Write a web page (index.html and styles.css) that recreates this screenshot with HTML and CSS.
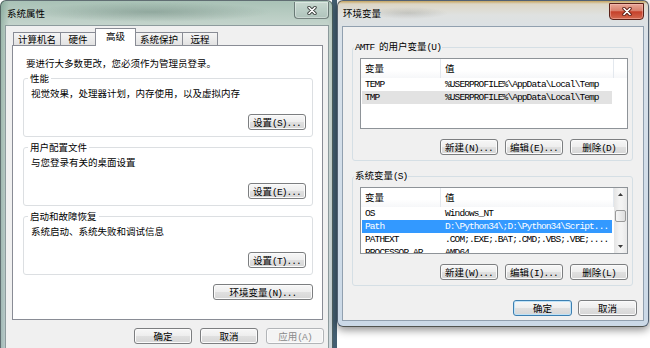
FILE: index.html
```html
<!DOCTYPE html>
<html lang="zh-CN">
<head>
<meta charset="utf-8">
<title>系统属性 / 环境变量</title>
<link rel="stylesheet" href="styles.css">
</head>
<body>
<div class="win win-sys">
  <div class="titlebar">
    <span class="title">系统属性</span>
    <span class="close close-inactive"><svg width="10" height="9" viewBox="0 0 10 9"><path d="M2 1.5l6 6M8 1.5l-6 6" stroke="#3a3f3d" stroke-width="3.4" stroke-linecap="round"/><path d="M2 1.5l6 6M8 1.5l-6 6" stroke="#fff" stroke-width="1.7" stroke-linecap="round"/></svg></span>
  </div>
  <div class="client">
    <div class="tabs">
      <span class="tab">计算机名</span>
      <span class="tab">硬件</span>
      <span class="tab active">高级</span>
      <span class="tab">系统保护</span>
      <span class="tab">远程</span>
    </div>
    <div class="panel">
      <p class="note">要进行大多数更改，您必须作为管理员登录。</p>
      <fieldset class="grp">
        <legend>性能</legend>
        <p>视觉效果，处理器计划，内存使用，以及虚拟内存</p>
        <div class="act"><button class="btn">设置<span class="m">(S)...</span></button></div>
      </fieldset>
      <fieldset class="grp">
        <legend>用户配置文件</legend>
        <p>与您登录有关的桌面设置</p>
        <div class="act"><button class="btn">设置<span class="m">(E)...</span></button></div>
      </fieldset>
      <fieldset class="grp">
        <legend>启动和故障恢复</legend>
        <p>系统启动、系统失败和调试信息</p>
        <div class="act"><button class="btn">设置<span class="m">(T)...</span></button></div>
      </fieldset>
      <div class="env-row"><button class="btn btn-wide">环境变量<span class="m">(N)...</span></button></div>
    </div>
    <div class="foot">
      <button class="btn">确定</button>
      <button class="btn">取消</button>
      <button class="btn" disabled>应用<span class="m">(A)</span></button>
    </div>
  </div>
</div>

<div class="win win-env">
  <div class="titlebar">
    <span class="title">环境变量</span>
    <span class="close close-active"><svg width="10" height="9" viewBox="0 0 10 9"><path d="M2 1.5l6 6M8 1.5l-6 6" stroke="#5a1a12" stroke-width="3.4" stroke-linecap="round"/><path d="M2 1.5l6 6M8 1.5l-6 6" stroke="#fff" stroke-width="1.7" stroke-linecap="round"/></svg></span>
  </div>
  <div class="client env-client">
    <fieldset class="grp egrp">
      <legend><span class="m">AMTF </span>的用户变量<span class="m">(U)</span></legend>
      <div class="list list-user">
        <div class="cols">
          <div class="lhead"><span class="hc hc1">变量</span><span class="hc hc2">值</span></div>
          <div class="row"><span class="c1 m">TEMP</span><span class="c2 m">%USERPROFILE%\AppData\Local\Temp</span></div>
          <div class="row sel-dim"><span class="c1 m">TMP</span><span class="c2 m">%USERPROFILE%\AppData\Local\Temp</span></div>
        </div>
      </div>
      <div class="btns">
        <button class="btn">新建<span class="m">(N)...</span></button>
        <button class="btn">编辑<span class="m">(E)...</span></button>
        <button class="btn">删除<span class="m">(D)</span></button>
      </div>
    </fieldset>
    <fieldset class="grp egrp egrp-sys">
      <legend>系统变量<span class="m">(S)</span></legend>
      <div class="list list-sys">
        <div class="cols">
          <div class="lhead"><span class="hc hc1">变量</span><span class="hc hc2">值</span></div>
          <div class="row"><span class="c1 m">OS</span><span class="c2 m">Windows_NT</span></div>
          <div class="row sel"><span class="c1 m">Path</span><span class="c2 m">D:\Python34\;D:\Python34\Script...</span></div>
          <div class="row"><span class="c1 m">PATHEXT</span><span class="c2 m">.COM;.EXE;.BAT;.CMD;.VBS;.VBE;....</span></div>
          <div class="row"><span class="c1 m">PROCESSOR_AR...</span><span class="c2 m">AMD64</span></div>
        </div>
        <div class="vscroll">
          <span class="sb-btn"><svg width="5" height="3" viewBox="0 0 5 3"><path d="M0 3L2.5 0L5 3z" fill="#3c3c3c"/></svg></span>
          <span class="sb-track"><span class="sb-thumb"></span></span>
          <span class="sb-btn"><svg width="5" height="3" viewBox="0 0 5 3"><path d="M0 0L2.5 3L5 0z" fill="#3c3c3c"/></svg></span>
        </div>
      </div>
      <div class="btns">
        <button class="btn">新建<span class="m">(W)...</span></button>
        <button class="btn">编辑<span class="m">(I)...</span></button>
        <button class="btn">删除<span class="m">(L)</span></button>
      </div>
    </fieldset>
    <div class="env-foot">
      <button class="btn btn-default">确定</button>
      <button class="btn">取消</button>
    </div>
  </div>
</div>
</body>
</html>
```
FILE: styles.css
```css
* { box-sizing: border-box; }
html, body { margin: 0; padding: 0; }
body {
  width: 650px;
  height: 348px;
  overflow: hidden;
  position: relative;
  font-family: "Noto Sans CJK SC", "Noto Sans", sans-serif;
  font-size: 9.5px;
  color: #000;
  background:
    linear-gradient(90deg, #ffffff 0 332px, #435f72 332px 337px, #ffffff 337px);
}
.m {
  font-family: "Liberation Mono", "DejaVu Sans Mono", monospace;
  letter-spacing: -0.9px;
}

/* ---------- windows ---------- */
.win {
  position: absolute;
  top: 0;
  display: flex;
  flex-direction: column;
  border: 1px solid rgba(25, 40, 45, 0.6);
  border-radius: 6px 6px 0 0;
}
.win-sys {
  left: 0;
  width: 333px;
  height: 348px;
  border-bottom: 0;
  padding: 0 3px 0 4px;
  background:
    radial-gradient(ellipse 120px 10px at 150px 11px, rgba(50, 80, 70, 0.28), transparent),
    linear-gradient(90deg, rgba(80, 130, 110, 0.35), transparent 8px),
    linear-gradient(180deg, #a9c2b6 0, #c4d4cc 24px, #c9d6d1 120px, #cdd7dc 100%);
}
.win-env {
  left: 337px;
  width: 312px;
  height: 327px;
  padding: 0 4px 5px 4px;
  border-radius: 6px;
  border-color: rgba(30, 45, 65, 0.7);
  background:
    radial-gradient(ellipse 40px 6px at 70px 12px, rgba(90, 90, 80, 0.2), transparent),
    linear-gradient(180deg, #c6a45e 0, #dcd6c6 3px, #dfe1e0 14px, #d8e1ea 40px, #cbd9e7 100%);
  box-shadow: 0 3px 8px rgba(0, 0, 0, 0.45);
}
.titlebar {
  display: flex;
  justify-content: space-between;
  align-items: flex-start;
  flex: none;
}
.win-sys .titlebar { height: 24px; }
.win-env .titlebar { height: 25px; }
.title {
  margin: 6px 0 0 2px;
  line-height: 12px;
  color: #000;
}
.win-env .title { margin-left: 1px; }
.close {
  width: 35px;
  height: 17px;
  display: flex;
  align-items: center;
  justify-content: center;
  border-radius: 0 0 4px 4px;
}
.close-inactive {
  margin-top: 1px;
  border: 1px solid rgba(40, 55, 55, 0.55);
  border-top: 0;
  background: linear-gradient(180deg, rgba(255,255,255,0.35), rgba(200,215,210,0.4) 50%, rgba(160,180,175,0.45));
  box-shadow: inset 0 0 0 1px rgba(255,255,255,0.35);
}
.close-active {
  margin-top: 2px;
  border: 1px solid #5b2118;
  background: linear-gradient(180deg, #e8a898 0, #d9806c 45%, #c5402a 52%, #d36a50 100%);
  box-shadow: inset 0 0 0 1px rgba(255, 200, 190, 0.45);
}

.client {
  flex: 1;
  min-height: 0;
  background: #f0f0f0;
  border: 1px solid rgba(60, 85, 90, 0.55);
}
.win-sys .client { border-bottom: 0; }

/* ---------- tabs ---------- */
.tabs {
  display: flex;
  align-items: flex-end;
  padding: 2px 0 0 7px;
}
.tab {
  height: 13px;
  min-width: 36px;
  padding: 0 4px;
  line-height: 12px;
  text-align: center;
  border: 1px solid #898c95;
  border-bottom: 0;
  background: linear-gradient(180deg, #f5f5f5, #e2e2e2);
  margin-right: -1px;
}
.tab.active {
  height: 18px;
  min-width: 41px;
  line-height: 15px;
  margin-bottom: -1px;
  background: #fff;
  position: relative;
  z-index: 1;
}
.panel {
  height: 275px;
  margin: 0 5px 0 6px;
  background: #fff;
  border: 1px solid #898c95;
  padding: 11px 9px 0 10px;
}
.note {
  margin: 0 0 3px 3px;
  line-height: 12px;
}

/* ---------- group boxes ---------- */
.grp {
  margin: 0;
  min-width: 0;
  border: 1px solid #dcdfe2;
  border-radius: 3px;
  padding: 3px 6px 6px 7px;
}
.grp legend {
  padding: 0 2px;
  margin-left: -3px;
  line-height: 12px;
}
.grp p { margin: 0; line-height: 12px; }
.grp + .grp { margin-top: 4px; }
.act {
  display: flex;
  justify-content: flex-end;
  margin-top: 15px;
}
.env-row {
  display: flex;
  justify-content: flex-end;
  margin-top: 9px;
}

/* ---------- buttons ---------- */
.btn {
  font: inherit;
  color: #000;
  width: 58px;
  height: 16px;
  padding: 0;
  line-height: 14px;
  text-align: center;
  white-space: nowrap;
  border: 1px solid #7c7e80;
  border-radius: 3px;
  background: linear-gradient(180deg, #f7f7f7 0, #eeeeee 48%, #e0e0e0 52%, #d6d6d6 100%);
  box-shadow: inset 0 0 0 1px #fbfbfb;
}
.btn-wide { width: 100px; }
.btn:disabled {
  color: #8a8a8a;
  border-color: #b2b5b8;
  background: #f4f4f4;
}
.btn-default {
  border-color: #3c7fb1;
  box-shadow: inset 0 0 0 1px #bfe2f7;
}
.foot {
  display: flex;
  justify-content: flex-end;
  gap: 8px;
  padding: 8px 4px 0 0;
}

/* ---------- env dialog ---------- */
.env-client {
  padding-top: 13px;
  border-color: rgba(50, 80, 110, 0.5);
}
.egrp {
  margin: 0 10px 0 9px;
  border-color: #d5dfe5;
  padding: 4px 4px 5px 7px;
}
.egrp legend {
  margin-left: -6px;
  padding: 0 1px;
}
.egrp + .egrp { margin-top: 8px; }
.list {
  display: flex;
  background: #fff;
  border: 1px solid #8e9398;
  overflow: hidden;
}
.list-user { height: 71px; }
.list-sys { height: 67px; }
.cols { flex: 1; min-width: 0; }
.lhead {
  display: flex;
  height: 19px;
  line-height: 19px;
  background: linear-gradient(180deg, #ffffff 0, #ffffff 60%, #f6f7f9 100%);
}
.hc {
  padding-left: 4px;
  border-right: 1px solid #e3e8ee;
}
.hc1 { width: 80px; }
.hc2 { width: 173px; }
.row {
  display: flex;
  width: 250px;
  margin-left: 1px;
  height: 13px;
  line-height: 13px;
  white-space: nowrap;
}
.c1 { width: 79px; padding-left: 3px; overflow: hidden; }
.c2 { padding-left: 4px; }
.row.sel-dim { background: #e2e2e2; }
.row.sel { background: #3399ff; color: #fff; }
.vscroll {
  width: 13px;
  display: flex;
  flex-direction: column;
  background: linear-gradient(90deg, #e4e4e4, #f3f3f3 40%, #f3f3f3 60%, #e8e8e8);
}
.sb-btn {
  height: 13px;
  display: flex;
  align-items: center;
  justify-content: center;
}
.sb-track { flex: 1; padding-top: 9px; }
.sb-thumb {
  display: block;
  height: 12px;
  margin: 0 1px;
  border: 1px solid #9a9a9a;
  border-radius: 2px;
  background: linear-gradient(90deg, #f6f6f6, #dedede);
}
.btns {
  display: flex;
  justify-content: flex-end;
  gap: 7px;
  margin-top: 10px;
}
.env-foot {
  display: flex;
  justify-content: flex-end;
  gap: 6px;
  padding: 14px 6px 0 0;
}
.env-foot .btn { width: 59px; }
```
